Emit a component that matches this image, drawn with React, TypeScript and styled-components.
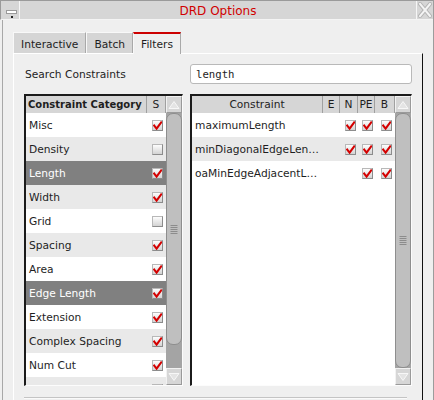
import React from "react";
import styled, { createGlobalStyle } from "styled-components";

const Global = createGlobalStyle`
  html, body { margin: 0; padding: 0; background: #efefef; }
  body {
    font-family: "DejaVu Sans", "Liberation Sans", sans-serif;
    font-size: 10.67px;
    color: #1e1e1e;
  }
  * { box-sizing: border-box; }
`;

const Window = styled.div`
  width: 434px;
  height: 400px;
  overflow: hidden;
  background: #efefef;
  display: flex;
  flex-direction: column;
  border-right: 1px solid #9c9c9c;
`;

const TitleBar = styled.div`
  height: 20px;
  flex: none;
  display: flex;
  background: #d6d6d6;
  border-top: 1px solid #9a9a9a;
  border-left: 1px solid #9a9a9a;
  border-bottom: 1px solid #f4f4f4;
`;

const TitleButton = styled.div<{ $w: number; $side: "left" | "right" }>`
  width: ${(p) => p.$w}px;
  flex: none;
  display: flex;
  align-items: center;
  justify-content: center;
  ${(p) =>
    p.$side === "left"
      ? "border-right: 1px solid #f6f6f6;"
      : "border-left: 1px solid #f6f6f6;"}
`;

const Title = styled.div`
  flex: 1;
  text-align: center;
  color: #d10000;
  font-size: 12px;
  line-height: 18px;
  padding-top: 1px;
`;

const Body = styled.div`
  flex: 1;
  min-height: 0;
  margin-left: 2px;
  border-left: 1px solid #a8a8a8;
  padding: 12px 10px 0 10px;
  display: flex;
  flex-direction: column;
`;

const TabRow = styled.div`
  display: flex;
  height: 21px;
  flex: none;
  align-items: flex-start;
`;

const Tab = styled.div<{ $active?: boolean }>`
  height: ${(p) => (p.$active ? 22 : 21)}px;
  padding: 0 7px;
  display: flex;
  align-items: center;
  background: ${(p) => (p.$active ? "#efefef" : "#d5d5d5")};
  border-left: 1px solid #f8f8f8;
  border-right: 1px solid #a9a9a9;
  border-top: ${(p) => (p.$active ? "2px solid #cc0000" : "1px solid #f8f8f8")};
  padding-top: ${(p) => (p.$active ? 0 : 2)}px;
  position: relative;
  z-index: 1;
`;

const Panel = styled.div`
  flex: 1;
  min-height: 0;
  border-top: 1px solid #fff;
  border-left: 1px solid #fff;
  border-right: 1px solid #111;
  padding: 10px 10px 0 10px;
  display: flex;
  flex-direction: column;
`;

const SearchRow = styled.div`
  height: 20px;
  flex: none;
  display: flex;
  align-items: center;
`;

const SearchLabel = styled.div`
  width: 166px;
  flex: none;
  padding-left: 1px;
`;

const SearchInput = styled.div`
  flex: 1;
  height: 20px;
  background: #fff;
  border: 1px solid #b9b9b9;
  border-radius: 3px;
  padding-left: 5px;
  display: flex;
  align-items: center;
  font-family: "DejaVu Sans Mono", "Liberation Mono", monospace;
  font-size: 10.67px;
  color: #1e1e1e;
`;

const TablesRow = styled.div`
  margin-top: 10px;
  height: 292px;
  flex: none;
  display: flex;
  gap: 7px;
`;

const Frame = styled.div<{ $w?: number }>`
  ${(p) => (p.$w ? `width: ${p.$w}px; flex: none;` : "flex: 1;")}
  border-top: 2px solid #1b1b1b;
  border-left: 2px solid #1b1b1b;
  border-bottom: 1px solid #fcfcfc;
  border-right: 1px solid #fcfcfc;
  display: flex;
  overflow: hidden;
  background: #fff;
`;

const TableMain = styled.div`
  flex: 1;
  min-width: 0;
  display: flex;
  flex-direction: column;
  overflow: hidden;
`;

const Header = styled.div`
  height: 17px;
  flex: none;
  display: flex;
  background: #d6d6d6;
`;

const HeaderCell = styled.div<{ $w?: number; $bold?: boolean; $left?: boolean }>`
  ${(p) => (p.$w ? `width: ${p.$w}px; flex: none;` : "flex: 1; min-width: 0;")}
  border-right: 1px solid #a0a0a0;
  line-height: 17px;
  text-align: ${(p) => (p.$left ? "left" : "center")};
  padding-left: ${(p) => (p.$left ? 2 : 0)}px;
  font-weight: ${(p) => (p.$bold ? "bold" : "normal")};
  font-size: ${(p) => (p.$bold ? "10px" : "10.67px")};
  white-space: nowrap;
  overflow: hidden;
  color: #1e1e1e;
`;

const Row = styled.div<{ $variant: "white" | "alt" | "selected" }>`
  height: 24px;
  flex: none;
  display: flex;
  align-items: center;
  background: ${(p) =>
    p.$variant === "selected" ? "#808080" : p.$variant === "alt" ? "#e9e9e9" : "#fff"};
  color: ${(p) => (p.$variant === "selected" ? "#fff" : "#1e1e1e")};
`;

const TextCell = styled.div`
  flex: 1;
  min-width: 0;
  padding-left: 3px;
  white-space: nowrap;
  overflow: hidden;
`;

const CheckCell = styled.div<{ $w: number }>`
  width: ${(p) => p.$w}px;
  flex: none;
  display: flex;
  justify-content: center;
  padding-left: 2px;
`;

const Box = styled.span`
  width: 11px;
  height: 11px;
  border: 1px solid;
  border-color: #b8b8b8 #8c8c8c #8c8c8c #b8b8b8;
  background: linear-gradient(#fdfdfd, #d3d3d3);
  display: inline-flex;
  align-items: center;
  justify-content: center;
`;

const ScrollBar = styled.div`
  width: 16px;
  flex: none;
  display: flex;
  flex-direction: column;
  background: #a4a4a4;
`;

const ArrowButton = styled.div`
  height: 17px;
  flex: none;
  background: #d6d6d6;
  border: 1px solid;
  border-color: #f2f2f2 #9a9a9a #9a9a9a #f2f2f2;
  display: flex;
  align-items: center;
  justify-content: center;
`;

const Track = styled.div`
  flex: 1;
  min-height: 0;
  display: flex;
  flex-direction: column;
`;

const Thumb = styled.div<{ $h?: number }>`
  ${(p) => (p.$h ? `height: ${p.$h}px; flex: none;` : "flex: 1;")}
  border: 1px solid #8e8e8e;
  border-radius: 7px;
  background: #bfbfbf;
  display: flex;
  align-items: center;
  justify-content: center;
`;

const Separator = styled.div`
  margin: 11px 5px 0 0;
  border-top: 1px solid #c4c4c4;
  border-bottom: 1px solid #fafafa;
  flex: none;
`;

const Check: React.FC<{ on: boolean }> = ({ on }) => (
  <Box>
    {on && (
      <svg width="9" height="9" viewBox="0 0 9 9">
        <polyline
          points="1.2,4.6 3.6,7.6 8.2,1.4"
          fill="none"
          stroke="#d40000"
          strokeWidth="2.1"
          strokeLinecap="square"
          strokeLinejoin="miter"
        />
      </svg>
    )}
  </Box>
);

const UpArrow = () => (
  <svg width="12" height="10" viewBox="0 0 12 10">
    <polygon points="1,8.5 6,1.5 11,8.5" fill="#e4e4e4" stroke="#f7f7f7" strokeWidth="1" />
  </svg>
);

const DownArrow = () => (
  <svg width="12" height="10" viewBox="0 0 12 10">
    <polygon points="1,1.5 6,8.5 11,1.5" fill="#e4e4e4" stroke="#f7f7f7" strokeWidth="1" />
  </svg>
);

const Grip = () => (
  <svg width="8" height="11" viewBox="0 0 8 11">
    {[1, 3, 5, 7, 9].map((y) => (
      <line key={y} x1="0.5" x2="7.5" y1={y + 0.5} y2={y + 0.5} stroke="#8c8c8c" strokeWidth="1" />
    ))}
  </svg>
);

const Scroller: React.FC<{ thumb?: number }> = ({ thumb }) => (
  <ScrollBar>
    <ArrowButton>
      <UpArrow />
    </ArrowButton>
    <Track>
      <Thumb $h={thumb}>
        <Grip />
      </Thumb>
    </Track>
    <ArrowButton>
      <DownArrow />
    </ArrowButton>
  </ScrollBar>
);

const categories: { name: string; on: boolean }[] = [
  { name: "Misc", on: true },
  { name: "Density", on: false },
  { name: "Length", on: true },
  { name: "Width", on: true },
  { name: "Grid", on: false },
  { name: "Spacing", on: true },
  { name: "Area", on: true },
  { name: "Edge Length", on: true },
  { name: "Extension", on: true },
  { name: "Complex Spacing", on: true },
  { name: "Num Cut", on: true },
  { name: "", on: true },
];
const selected = new Set(["Length", "Edge Length"]);

type Flag = boolean | null;
const constraints: { name: string; e: Flag; n: Flag; pe: Flag; b: Flag }[] = [
  { name: "maximumLength", e: null, n: true, pe: true, b: true },
  { name: "minDiagonalEdgeLen…", e: null, n: true, pe: true, b: true },
  { name: "oaMinEdgeAdjacentL…", e: null, n: null, pe: true, b: true },
];

const cols = { e: 17, n: 18, pe: 17, b: 20 };

export default function App() {
  return (
    <>
      <Global />
      <Window>
        <TitleBar>
          <TitleButton $w={19} $side="left">
            <svg width="18" height="18" viewBox="0 0 18 18">
              <rect x="5.5" y="9.5" width="10" height="3" fill="#fff" stroke="#9a9a9a" />
              <rect x="10" y="15" width="2" height="2" fill="#222" />
            </svg>
          </TitleButton>
          <Title>DRD Options</Title>
          <TitleButton $w={17} $side="right">
            <svg width="14" height="16" viewBox="0 0 14 16">
              <path d="M2 2 L12 14 M12 2 L2 14" stroke="#b4b4b4" strokeWidth="4" strokeLinecap="square" />
              <path d="M2 2 L12 14 M12 2 L2 14" stroke="#f4f4f4" strokeWidth="2" strokeLinecap="square" />
            </svg>
          </TitleButton>
        </TitleBar>
        <Body>
          <TabRow>
            <Tab>Interactive</Tab>
            <Tab>Batch</Tab>
            <Tab $active>Filters</Tab>
          </TabRow>
          <Panel>
            <SearchRow>
              <SearchLabel>Search Constraints</SearchLabel>
              <SearchInput>length</SearchInput>
            </SearchRow>
            <TablesRow>
              <Frame $w={159}>
                <TableMain>
                  <Header>
                    <HeaderCell $bold $left>
                      Constraint Category
                    </HeaderCell>
                    <HeaderCell $w={19}>S</HeaderCell>
                  </Header>
                  {categories.map((c, i) => (
                    <Row
                      key={c.name || `row-${i}`}
                      $variant={selected.has(c.name) ? "selected" : i % 2 ? "alt" : "white"}
                    >
                      <TextCell>{c.name}</TextCell>
                      <CheckCell $w={19}>
                        <Check on={c.on} />
                      </CheckCell>
                    </Row>
                  ))}
                </TableMain>
                <Scroller thumb={232} />
              </Frame>
              <Frame>
                <TableMain>
                  <Header>
                    <HeaderCell>Constraint</HeaderCell>
                    <HeaderCell $w={cols.e}>E</HeaderCell>
                    <HeaderCell $w={cols.n}>N</HeaderCell>
                    <HeaderCell $w={cols.pe}>PE</HeaderCell>
                    <HeaderCell $w={cols.b}>B</HeaderCell>
                  </Header>
                  {constraints.map((c, i) => (
                    <Row key={c.name} $variant={i % 2 ? "alt" : "white"}>
                      <TextCell>{c.name}</TextCell>
                      {(["e", "n", "pe", "b"] as const).map((k) => (
                        <CheckCell key={k} $w={cols[k]}>
                          {c[k] !== null && <Check on={!!c[k]} />}
                        </CheckCell>
                      ))}
                    </Row>
                  ))}
                </TableMain>
                <Scroller />
              </Frame>
            </TablesRow>
            <Separator />
          </Panel>
        </Body>
      </Window>
    </>
  );
}
